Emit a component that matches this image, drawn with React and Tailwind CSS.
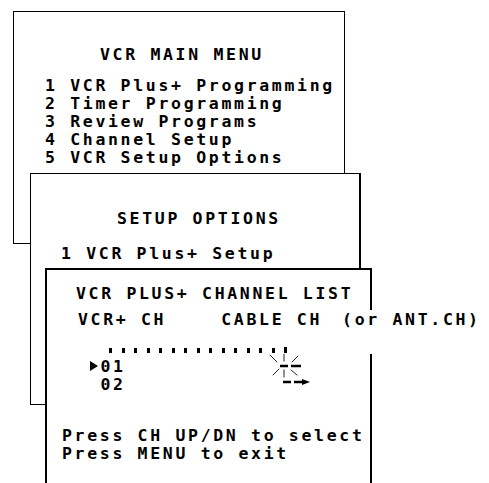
import React from 'react';

const mono = "font-['DejaVu_Sans_Mono',monospace] font-bold text-[16.5px] tracking-[2.67px] text-black whitespace-pre";

const menuItems = [
  '1 VCR Plus+ Programming',
  '2 Timer Programming',
  '3 Review Programs',
  '4 Channel Setup',
  '5 VCR Setup Options',
];

const Flasher = () => (
  <svg
    className="absolute left-[218px] top-[70px]"
    width="50"
    height="50"
    viewBox="0 0 50 50"
  >
    {/* blinking cursor rays */}
    <g stroke="#222" strokeWidth="1" strokeLinecap="round">
      <line x1="19" y1="13" x2="19" y2="21" />
      <line x1="19" y1="30" x2="19" y2="37" />
      <line x1="5" y1="15" x2="12" y2="22" />
      <line x1="33" y1="16" x2="27" y2="22" />
      <line x1="8" y1="35" x2="14" y2="29" />
      <line x1="32" y1="35" x2="26" y2="30" />
    </g>
    <g stroke="#000" strokeWidth="2.5">
      <line x1="15" y1="26" x2="23" y2="26" />
      <line x1="26" y1="26" x2="36" y2="26" />
      <line x1="18" y1="42" x2="26" y2="42" />
      <line x1="29" y1="42" x2="38" y2="42" />
    </g>
    <polygon points="37,39 45,42 37,45" fill="#000" />
  </svg>
);

export default function App() {
  return (
    <div className={`relative w-[489px] h-[483px] overflow-hidden bg-white pt-[11px] ${mono}`}>
      {/* Main menu screen */}
      <div className="ml-[13px] w-[332px] h-[233px] border border-black pt-[34px]">
        <div className="pl-[86px] leading-[18px]">VCR MAIN MENU</div>
        <div className="mt-[13px] pl-[31px] leading-[17.9px]">
          {menuItems.map((item) => (
            <div key={item}>{item}</div>
          ))}
        </div>
      </div>

      {/* Setup options screen */}
      <div className="relative mt-[-71px] ml-[30px] w-[331px] h-[232px] border border-r-2 border-black bg-white pt-[36px]">
        <div className="pl-[86px] leading-[18px]">SETUP OPTIONS</div>
        <div className="mt-[17px] pl-[30px] leading-[18px]">1 VCR Plus+ Setup</div>
      </div>

      {/* Channel list screen */}
      <div className="relative mt-[-137px] ml-[45px] w-[327px] h-[240px] border-2 border-b-0 border-black bg-white pt-[15px]">
        <div className="pl-[29px] leading-[18px]">VCR PLUS+ CHANNEL LIST</div>

        <div className="relative z-10 mt-[7px] mr-[-4px] bg-white pt-[1px] pb-[1px]">
          <div className="flex pl-[31px] leading-[18px]">
            <span>VCR+ CH</span>
            <span className="ml-[55px]">CABLE CH</span>
            <span className="ml-[20px]">(or ANT.CH)</span>
          </div>
          <div className="mt-[18px] ml-[62px] flex items-end gap-[9.5px] h-[6px]">
            {Array.from({ length: 14 }).map((_, i) => (
              <span key={i} className="w-[3px] h-[5px] bg-black" />
            ))}
            <span className="w-[3px] h-[6px] bg-black" />
          </div>
        </div>

        <div className="mt-[4px] ml-[43px] leading-[17.5px]">
          <div className="flex items-center">
            <svg width="8" height="10" viewBox="0 0 8 10" className="mt-[-1px]">
              <polygon points="0,0 8,5 0,10" fill="#000" />
            </svg>
            <span className="ml-[2.5px]">01</span>
          </div>
          <div className="pl-[10.5px]">02</div>
        </div>

        <div className="mt-[34px] ml-[15px] leading-[17.5px]">
          <div>Press CH UP/DN to select</div>
          <div>Press MENU to exit</div>
        </div>

        <Flasher />
      </div>
    </div>
  );
}
